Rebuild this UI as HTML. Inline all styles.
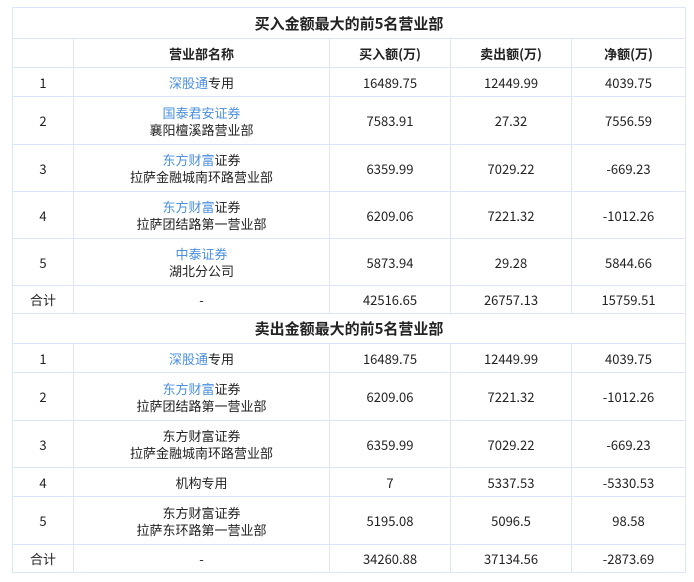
<!DOCTYPE html><html><head><meta charset="utf-8"><style>
body{margin:0;background:#fff;font-family:"Noto Sans CJK SC","Liberation Sans",sans-serif;font-size:13px;color:#222}
table{position:absolute;left:12px;top:7px;border-collapse:collapse;width:673px;table-layout:fixed}
td{border:1px solid #dce6f6;text-align:center;vertical-align:middle;padding:0;line-height:17px}
.t td{font-weight:bold;font-size:15px}
.h td{font-weight:bold}
.b{color:#4a8fe0}
</style></head><body>
<table>
<colgroup><col style="width:61px"><col style="width:256px"><col style="width:121px"><col style="width:121px"><col style="width:114px"></colgroup>
<tr class="t" style="height:31px"><td colspan="5">买入金额最大的前5名营业部</td></tr>
<tr class="h" style="height:29px"><td></td><td>营业部名称</td><td>买入额(万)</td><td>卖出额(万)</td><td>净额(万)</td></tr>
<tr style="height:29px"><td>1</td><td><span class="b">深股通</span>专用</td><td>16489.75</td><td>12449.99</td><td>4039.75</td></tr>
<tr style="height:48px"><td>2</td><td><span class="b">国泰君安证券</span><br>襄阳檀溪路营业部</td><td>7583.91</td><td>27.32</td><td>7556.59</td></tr>
<tr style="height:47px"><td>3</td><td><span class="b">东方财富</span>证券<br>拉萨金融城南环路营业部</td><td>6359.99</td><td>7029.22</td><td>-669.23</td></tr>
<tr style="height:47px"><td>4</td><td><span class="b">东方财富</span>证券<br>拉萨团结路第一营业部</td><td>6209.06</td><td>7221.32</td><td>-1012.26</td></tr>
<tr style="height:47px"><td>5</td><td><span class="b">中泰证券</span><br>湖北分公司</td><td>5873.94</td><td>29.28</td><td>5844.66</td></tr>
<tr style="height:28px"><td>合计</td><td>-</td><td>42516.65</td><td>26757.13</td><td>15759.51</td></tr>
<tr class="t" style="height:30px"><td colspan="5">卖出金额最大的前5名营业部</td></tr>
<tr style="height:29px"><td>1</td><td><span class="b">深股通</span>专用</td><td>16489.75</td><td>12449.99</td><td>4039.75</td></tr>
<tr style="height:48px"><td>2</td><td><span class="b">东方财富</span>证券<br>拉萨团结路第一营业部</td><td>6209.06</td><td>7221.32</td><td>-1012.26</td></tr>
<tr style="height:47px"><td>3</td><td>东方财富证券<br>拉萨金融城南环路营业部</td><td>6359.99</td><td>7029.22</td><td>-669.23</td></tr>
<tr style="height:29px"><td>4</td><td>机构专用</td><td>7</td><td>5337.53</td><td>-5330.53</td></tr>
<tr style="height:48px"><td>5</td><td>东方财富证券<br>拉萨东环路第一营业部</td><td>5195.08</td><td>5096.5</td><td>98.58</td></tr>
<tr style="height:28px"><td>合计</td><td>-</td><td>34260.88</td><td>37134.56</td><td>-2873.69</td></tr>
</table>
</body></html>
